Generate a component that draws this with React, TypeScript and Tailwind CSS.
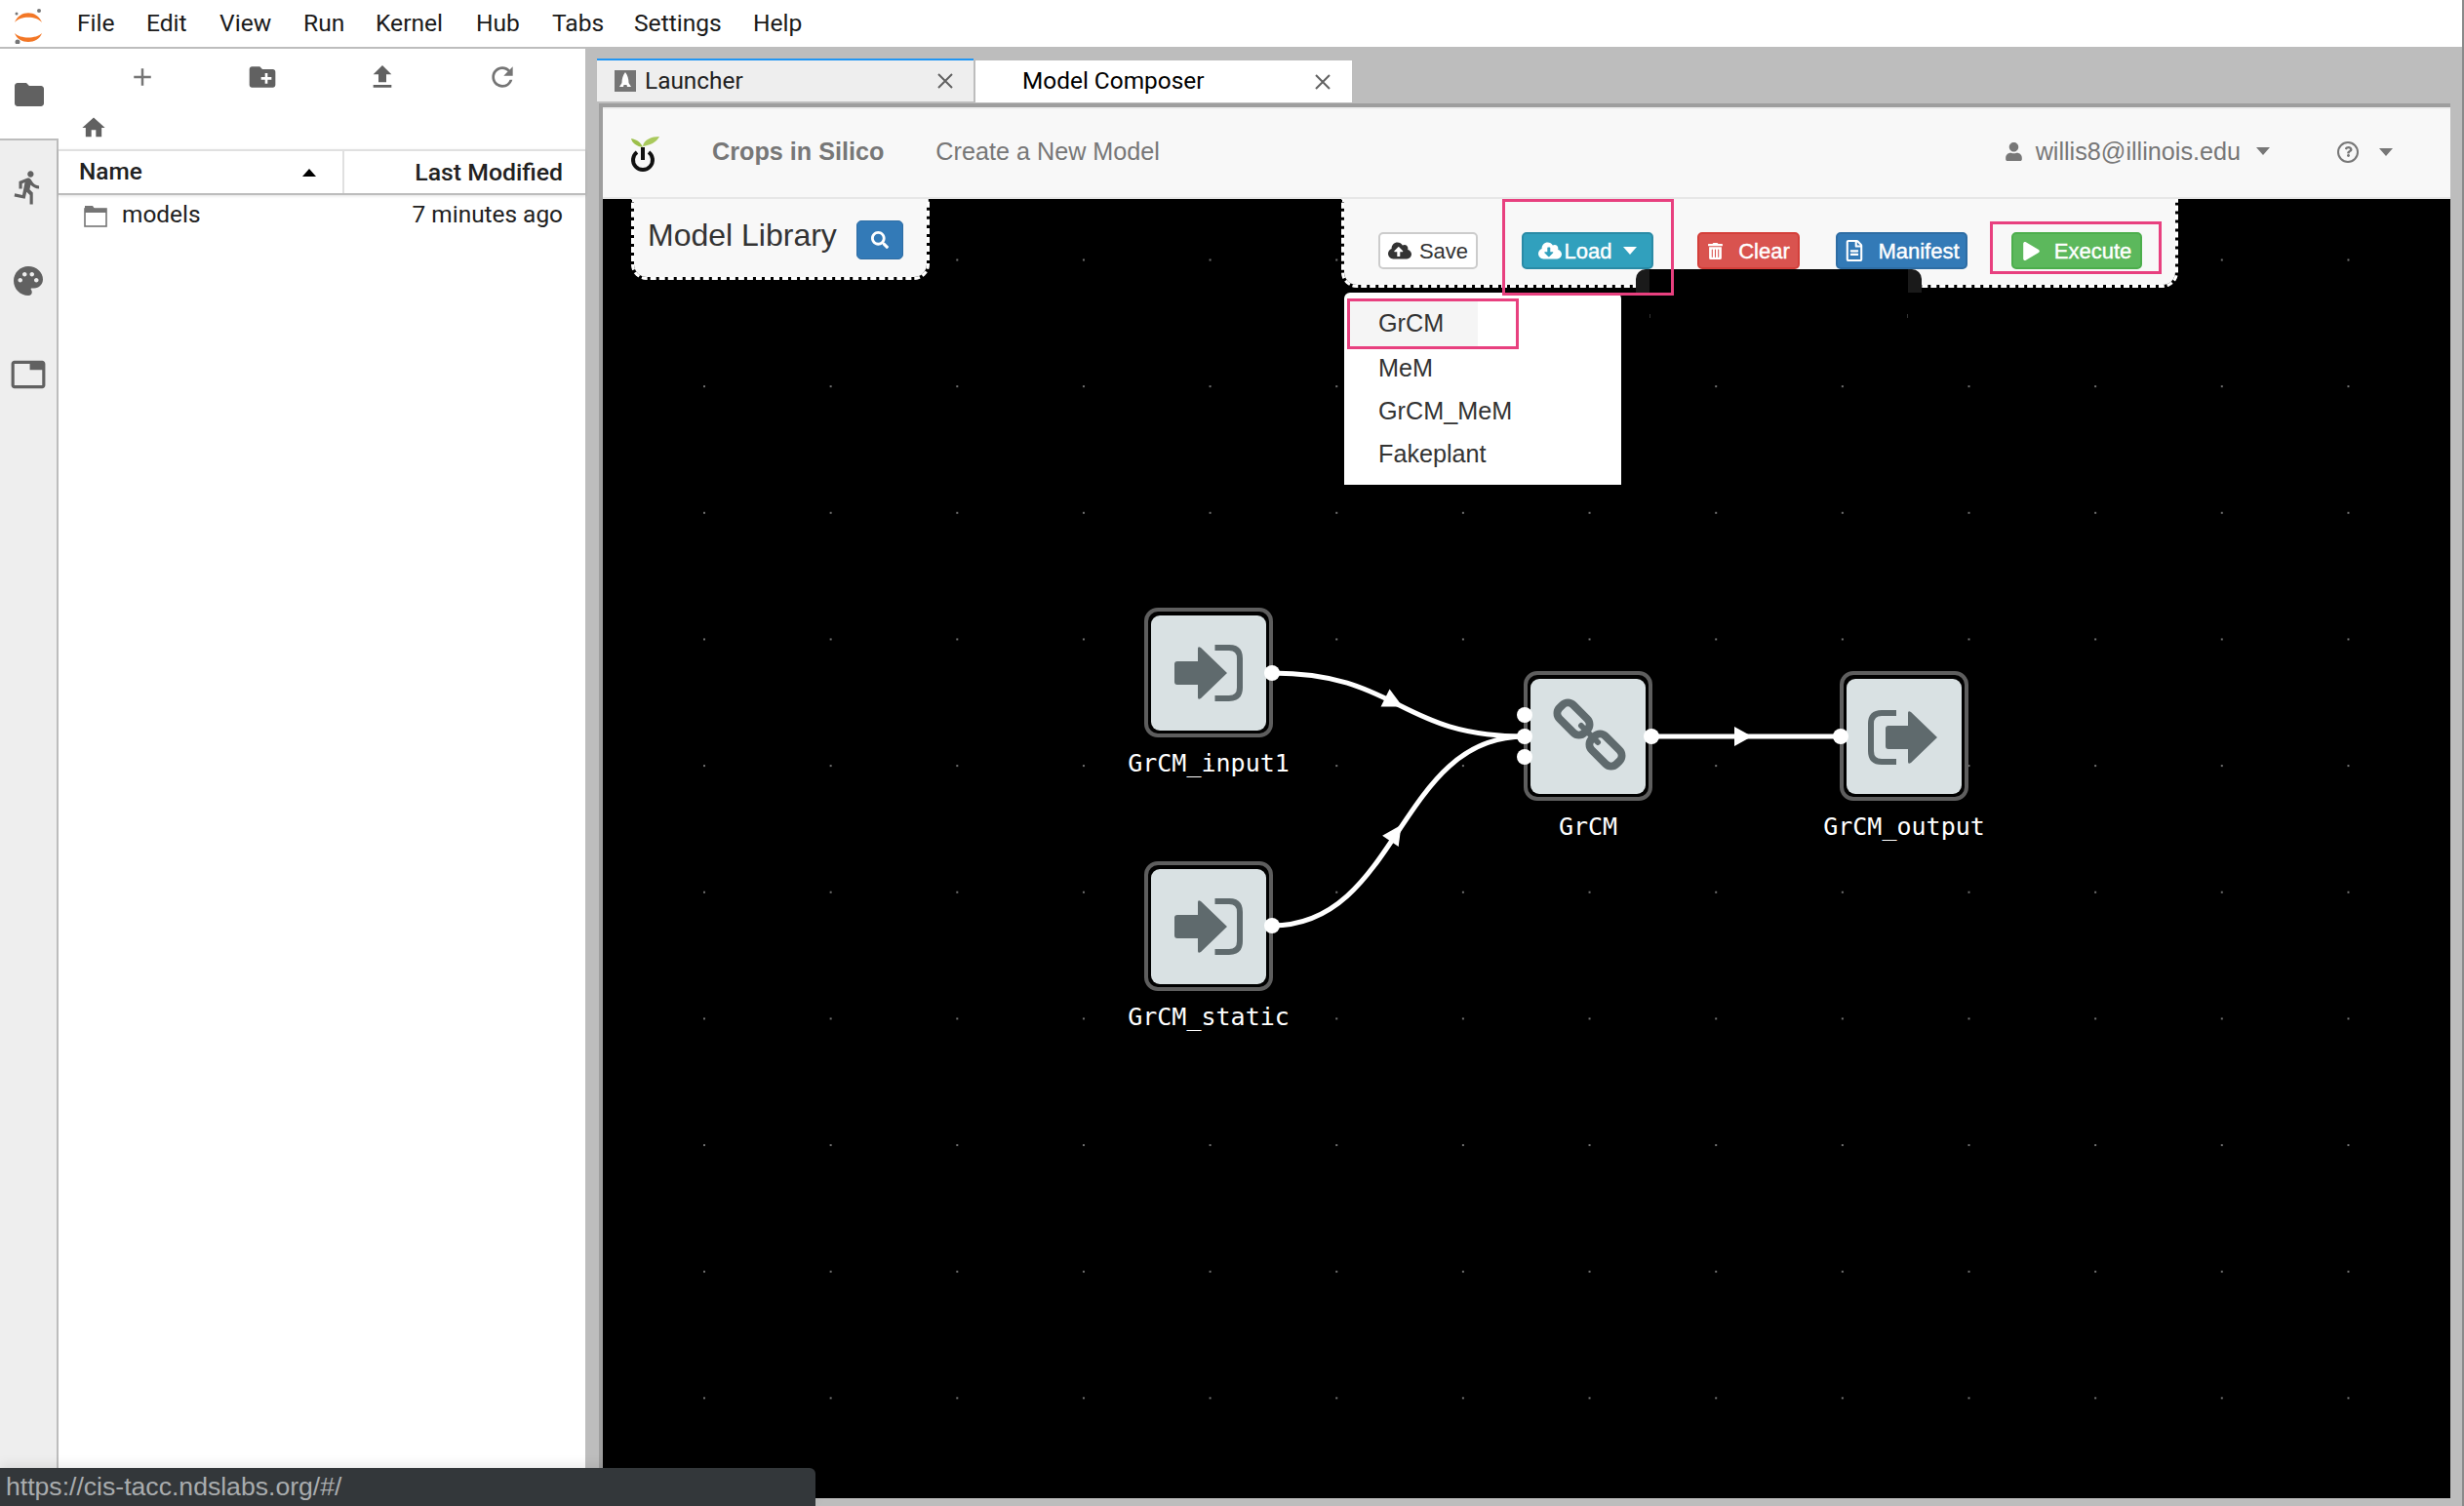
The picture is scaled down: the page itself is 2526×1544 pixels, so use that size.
import React from 'react';
import {
  MdAdd,
  MdCreateNewFolder,
  MdDirectionsRun,
  MdFileUpload,
  MdFolder,
  MdHome,
  MdPalette,
  MdRefresh,
  MdTab,
} from 'react-icons/md';
import {
  FaCloudDownloadAlt,
  FaCloudUploadAlt,
  FaPlay,
  FaQuestion,
  FaRegFileAlt,
  FaSearch,
  FaTrashAlt,
  FaUser,
} from 'react-icons/fa';

const MENU_ITEMS = [
  { label: 'File', width: 'w-[71px]' },
  { label: 'Edit', width: 'w-[75px]' },
  { label: 'View', width: 'w-[86px]' },
  { label: 'Run', width: 'w-[74px]' },
  { label: 'Kernel', width: 'w-[103px]' },
  { label: 'Hub', width: 'w-[78px]' },
  { label: 'Tabs', width: 'w-[84px]' },
  { label: 'Settings', width: 'w-[122px]' },
  { label: 'Help', width: 'w-[60px]' },
];

function JupyterLogo() {
  return (
    <svg width="32" height="40" viewBox="0 0 32 40" className="ml-[13px] mr-[34px]">
      <path d="M2 18 C7 5 25 5 30 18 C24 11 8 11 2 18 Z" fill="#f37726" />
      <path d="M2 29 C8 35 24 35 30 29 C26 41 6 41 2 29 Z" fill="#f37726" />
      <circle cx="27" cy="6" r="2" fill="#767677" />
      <circle cx="4" cy="9" r="1.5" fill="#767677" />
      <circle cx="5" cy="38" r="2.5" fill="#767677" />
    </svg>
  );
}

function CloseIcon() {
  return (
    <svg width="18" height="18" viewBox="0 0 18 18" fill="none" stroke="#616161" strokeWidth="2">
      <path d="M2 2 L16 16 M16 2 L2 16" />
    </svg>
  );
}

function Caret({ className }: { className: string }) {
  return <span className={`inline-block h-0 w-0 border-x-[7px] border-t-[8px] border-x-transparent ${className}`} />;
}

function Sidebar() {
  return (
    <div className="flex w-[60px] shrink-0 flex-col bg-[#eeeeee] border-r-2 border-[#bdbdbd]">
      <div className="-mr-[2px] flex h-[94px] items-center justify-center bg-white pt-[2px] border-b-2 border-[#bdbdbd]">
        <MdFolder size={36} color="#616161" />
      </div>
      <div className="flex h-[96px] items-center justify-center">
        <MdDirectionsRun size={38} color="#616161" />
      </div>
      <div className="flex h-[96px] items-center justify-center">
        <MdPalette size={36} color="#616161" />
      </div>
      <div className="flex h-[96px] items-center justify-center">
        <MdTab size={38} color="#616161" />
      </div>
    </div>
  );
}

function FilePanel() {
  return (
    <div className="flex w-[540px] shrink-0 flex-col bg-white font-['Roboto',sans-serif] text-[24.4px] text-[#212121]">
      <div className="grid h-[58px] grid-cols-4 items-center pl-[24px] w-[516px]">
        <div className="flex justify-center"><MdAdd size={30} color="#757575" /></div>
        <div className="flex justify-center"><MdCreateNewFolder size={32} color="#616161" /></div>
        <div className="flex justify-center"><MdFileUpload size={32} color="#616161" /></div>
        <div className="flex justify-center"><MdRefresh size={32} color="#757575" /></div>
      </div>
      <div className="flex h-[45px] items-center pl-[22px]">
        <MdHome size={28} color="#616161" />
      </div>
      <div className="flex h-[47px] border-y-2 border-t-[#e0e0e0] border-b-[#bdbdbd] font-medium shadow-[0_1px_3px_rgba(0,0,0,0.12)]">
        <div className="flex w-[293px] items-center justify-between pl-[21px] pr-[27px] border-r-2 border-[#e0e0e0]">
          <span>Name</span>
          <Caret className="rotate-180 border-t-black" />
        </div>
        <div className="flex-1 flex items-center justify-end pr-[23px] text-[24.8px]">
          <span>Last Modified</span>
        </div>
      </div>
      <div className="flex h-[41px] items-center pl-[26px] pr-[23px]">
        <svg width="24" height="24" viewBox="0 0 24 24" fill="none" className="mr-[15px]">
          <path d="M1 5 V2 H9 L11 5 H23 V9 H1 Z" fill="#757575" />
          <rect x="1" y="5" width="22" height="18" stroke="#757575" strokeWidth="1.6" />
        </svg>
        <span>models</span>
        <span className="ml-auto">7 minutes ago</span>
      </div>
    </div>
  );
}

function Tabs() {
  return (
    <div className="-ml-[2px] flex h-[46px] font-['Roboto',sans-serif] text-[24.4px] text-black">
      <div className="flex w-[386px] items-center border-t-2 border-[#2196f3] border-b-2 border-b-[#bdbdbd] bg-[#eeeeee] pl-[18px] pr-[20px] mr-[2px]">
        <svg width="22" height="22" viewBox="0 0 22 22" className="mr-[9px]">
          <rect width="22" height="22" fill="#757575" />
          <path d="M11 2 C13.5 5 14.5 9 14.5 13 L17 17 H13 L12.5 15 H9.5 L9 17 H5 L7.5 13 C7.5 9 8.5 5 11 2 Z" fill="#fff" />
        </svg>
        <span className="text-[#212121]">Launcher</span>
        <span className="ml-auto"><CloseIcon /></span>
      </div>
      <div className="flex w-[386px] items-center bg-white mt-[2px] mb-[1px] pl-[48px] pr-[21px]">
        <span>Model Composer</span>
        <span className="ml-auto"><CloseIcon /></span>
      </div>
    </div>
  );
}

function Navbar() {
  return (
    <div className="flex h-[94px] shrink-0 items-center border-t-2 border-t-[#eeeeee] border-b-2 border-b-[#e7e7e7] bg-[#f8f8f8] pb-[3px] pl-[28px] font-['Liberation_Sans',sans-serif] text-[25.2px] text-[#777777]">
      <svg width="32" height="38" viewBox="0 0 32 38" className="mr-[52px] mt-[3px]">
        <path d="M13 13 C11 8 7 5 1 4 C2 9 7 12 13 13 Z" fill="#9cbf4a" />
        <path d="M13 12 C14 5 22 2 30 2 C27 8 20 11 13 12 Z" fill="#a9c95c" />
        <path d="M7 18 A10 10 0 1 0 19 18" fill="none" stroke="#111" strokeWidth="4" />
        <path d="M13 13 V26" stroke="#111" strokeWidth="4" />
      </svg>
      <span className="font-bold">Crops in Silico</span>
      <span className="ml-[53px]">Create a New Model</span>
      <span className="ml-auto flex items-center">
        <FaUser size={19} className="mr-[13px]" />
        <span>willis8@illinois.edu</span>
        <Caret className="ml-[16px] border-t-[#777777]" />
      </span>
      <span className="ml-[69px] mr-[59px] flex items-center">
        <span className="flex h-[22px] w-[22px] items-center justify-center rounded-full border-2 border-[#777777]">
          <FaQuestion size={11} />
        </span>
        <Caret className="ml-[21px] border-t-[#777777]" />
      </span>
    </div>
  );
}

function ToolButton({ children, className }: { children: React.ReactNode; className: string }) {
  return (
    <button className={`flex h-[38px] items-center justify-center rounded-[5px] border-2 text-[22px] ${className}`}>
      {children}
    </button>
  );
}

function Toolbar() {
  return (
    <>
      <div className="absolute left-[757px] top-0 flex h-[91px] w-[858px] rounded-b-[16px] border-x-[3px] border-b-[3px] border-dashed border-white bg-[#f8f8f8] bg-clip-padding pl-[35px] pt-[34px]">
        <ToolButton className="w-[102px] gap-[8px] border-[#cccccc] bg-white text-[#333333]">
          <FaCloudUploadAlt size={24} />
          Save
        </ToolButton>
        <ToolButton className="ml-[45px] w-[135px] gap-[3px] border-[#2a8ba6] bg-[#31a0bd] text-white [-webkit-text-stroke:0.4px_white]">
          <FaCloudDownloadAlt size={24} />
          Load
          <Caret className="ml-[9px] border-t-white" />
        </ToolButton>
        <ToolButton className="ml-[45px] w-[105px] gap-[15px] border-[#d43f3a] bg-[#d9534f] text-white [-webkit-text-stroke:0.4px_white]">
          <FaTrashAlt size={17} />
          Clear
        </ToolButton>
        <ToolButton className="ml-[37px] w-[135px] gap-[13px] border-[#2e6da4] bg-[#337ab7] text-white [-webkit-text-stroke:0.4px_white]">
          <FaRegFileAlt size={22} />
          Manifest
        </ToolButton>
        <ToolButton className="ml-[45px] w-[134px] gap-[14px] border-[#4cae4c] bg-[#5cb85c] text-white [-webkit-text-stroke:0.4px_white]">
          <FaPlay size={19} />
          Execute
        </ToolButton>
      </div>
      <div className="absolute left-[1059px] top-[72px] h-[24px] w-[293px] rounded-t-[10px] bg-[#1a1a1a] px-[14px]">
        <div className="h-full bg-black" />
      </div>
      <div className="absolute left-[760px] top-[96px] h-[197px] w-[284px] rounded-t-[6px] bg-white pt-[9px] text-[25.2px] text-[#333333]">
        <div className="ml-[3px] flex h-[47px] w-[134px] items-center bg-[#f5f5f5] pl-[32px] pb-[2px]">GrCM</div>
        <div className="flex h-[44px] items-center pl-[35px]">MeM</div>
        <div className="flex h-[44px] items-center pl-[35px]">GrCM_MeM</div>
        <div className="flex h-[44px] items-center pl-[35px]">Fakeplant</div>
      </div>
      <div className="absolute left-[922px] top-0 h-[99px] w-[176px] border-[3px] border-[#e8407f]" />
      <div className="absolute left-[1422px] top-[23px] h-[54px] w-[176px] border-[3px] border-[#e8407f]" />
      <div className="absolute left-[763px] top-[102px] h-[52px] w-[176px] border-[3px] border-[#e8407f]" />
    </>
  );
}

function SignInIcon() {
  return (
    <svg width="118" height="118" viewBox="0 0 118 118" fill="#5f6a6d">
      <path d="M24 50 Q24 47 27 47 H48 V34 Q48 31 51 33 L78 59 L51 85 Q48 87 48 84 V71 H27 Q24 71 24 68 Z" />
      <path d="M65.5 33 H80 Q91 33 91 44 V74 Q91 85 80 85 H65.5" fill="none" stroke="#5f6a6d" strokeWidth="6" />
    </svg>
  );
}

function SignOutIcon() {
  return (
    <svg width="118" height="118" viewBox="0 0 118 118" fill="#5f6a6d">
      <path d="M40 51 Q40 48 43 48 H63 V35 Q63 32 66 34 L93 60 L66 86 Q63 88 63 85 V72 H43 Q40 72 40 69 Z" />
      <path d="M51 35 H36 Q25 35 25 46 V74 Q25 85 36 85 H51" fill="none" stroke="#5f6a6d" strokeWidth="6" />
    </svg>
  );
}

function LinkIcon() {
  return (
    <svg width="118" height="118" viewBox="0 0 118 118" fill="none" stroke="#5f6a6d" strokeWidth="8">
      <rect x="26" y="31" width="36" height="20" rx="8" transform="rotate(45 44 41)" />
      <rect x="59" y="63" width="36" height="20" rx="8" transform="rotate(45 77 73)" />
      <path d="M52 48 L69 65" strokeWidth="6" strokeLinecap="round" />
    </svg>
  );
}

function GraphNode({ position, label, children }: { position: string; label: string; children: React.ReactNode }) {
  return (
    <div className={`absolute flex w-[132px] flex-col items-center ${position}`}>
      <div className="flex h-[133px] w-[132px] items-center justify-center rounded-[14px] border-4 border-[#5e5e5e] bg-black">
        <div className="h-[118px] w-[118px] rounded-[9px] bg-[#d9e1e3]">{children}</div>
      </div>
      <div className="mt-[12px] whitespace-nowrap font-['DejaVu_Sans_Mono',monospace] text-[25px] leading-[30px] text-white">
        {label}
      </div>
    </div>
  );
}

function Canvas() {
  return (
    <div className="relative min-h-0 flex-1 overflow-hidden bg-black font-['Liberation_Sans',sans-serif]">
      <svg className="absolute inset-0 h-full w-full">
        <defs>
          <pattern id="dots" x="103" y="61.5" width="129.65" height="129.65" patternUnits="userSpaceOnUse">
            <rect width="2" height="2" fill="#6f6f6f" />
          </pattern>
        </defs>
        <rect width="100%" height="100%" fill="url(#dots)" />
        <rect x="1073" y="118" width="1" height="4" fill="#333" />
        <rect x="1337" y="118" width="1" height="4" fill="#333" />
      </svg>

      <div className="absolute left-[29px] top-0 h-[83px] w-[306px] rounded-b-[16px] border-x-[3px] border-b-[3px] border-dashed border-white bg-[#f8f8f8] bg-clip-padding">
        <span className="absolute left-[14px] top-[17px] text-[32px] leading-[40px] text-[#333333]">Model Library</span>
        <span className="absolute left-[228px] top-[22px] flex h-[40px] w-[48px] items-center justify-center rounded-[5px] border border-[#2e6da4] bg-[#337ab7]">
          <FaSearch size={18} color="#ffffff" />
        </span>
      </div>

      <Toolbar />

      <GraphNode position="left-[555px] top-[419px]" label="GrCM_input1"><SignInIcon /></GraphNode>
      <GraphNode position="left-[555px] top-[679px]" label="GrCM_static"><SignInIcon /></GraphNode>
      <GraphNode position="left-[944px] top-[484px]" label="GrCM"><LinkIcon /></GraphNode>
      <GraphNode position="left-[1268px] top-[484px]" label="GrCM_output"><SignOutIcon /></GraphNode>

      <svg className="absolute inset-0 h-full w-full" fill="#ffffff">
        <path d="M686 486 C816 486 815 551 945 551" fill="none" stroke="#ffffff" strokeWidth="5" />
        <path d="M686 745 C816 745 815 551 945 551" fill="none" stroke="#ffffff" strokeWidth="5" />
        <path d="M1075 551 H1269" fill="none" stroke="#ffffff" strokeWidth="5" />
        <path d="M-10 -10 L10 0 L-10 10 Z" transform="translate(811 516) rotate(26.7)" />
        <path d="M-10 -10 L10 0 L-10 10 Z" transform="translate(813 650) rotate(-56)" />
        <path d="M-10 -10 L8 0 L-10 10 Z" transform="translate(1170 551)" />
        <circle cx="686" cy="486" r="8" />
        <circle cx="686" cy="745" r="8" />
        <circle cx="945" cy="529" r="8" />
        <circle cx="945" cy="551" r="8" />
        <circle cx="945" cy="572" r="8" />
        <circle cx="1075" cy="551" r="8" />
        <circle cx="1269" cy="551" r="8" />
      </svg>
    </div>
  );
}

export default function App() {
  return (
    <div className="relative flex h-[1544px] w-[2526px] overflow-hidden bg-[#bdbdbd]">
      <div className="flex w-[2524px] flex-col">
        {/* Top menu */}
        <div className="flex h-[48px] shrink-0 items-center bg-white pt-[1px] font-['Roboto',sans-serif] text-[24.6px] text-[#1a1a1a]">
          <JupyterLogo />
          {MENU_ITEMS.map((item) => (
            <span key={item.label} className={item.width}>{item.label}</span>
          ))}
        </div>

        <div className="flex min-h-0 flex-1 pt-[2px]">
          <Sidebar />
          <FilePanel />
          {/* Main area */}
          <div className="flex min-w-0 flex-1 flex-col pb-[8px] pl-[14px] pr-[12px] pt-[10px]">
            <Tabs />
            <div className="flex min-h-0 flex-1 flex-col border-l-4 border-t-4 border-[#9e9e9e]">
              <Navbar />
              <Canvas />
            </div>
          </div>
        </div>
      </div>
      <div className="w-[2px] bg-[#8a8a8a]" />

      {/* Browser status bubble */}
      <div className="absolute bottom-0 left-0 flex h-[39px] w-[836px] items-center rounded-tr-[6px] bg-[#33373a] pl-[6px] pt-[1px] font-['Liberation_Sans',sans-serif] text-[26.6px] text-[#a9acae] shadow-[0_-4px_12px_rgba(0,0,0,0.08)]">
        https://cis-tacc.ndslabs.org/#/
      </div>
    </div>
  );
}
